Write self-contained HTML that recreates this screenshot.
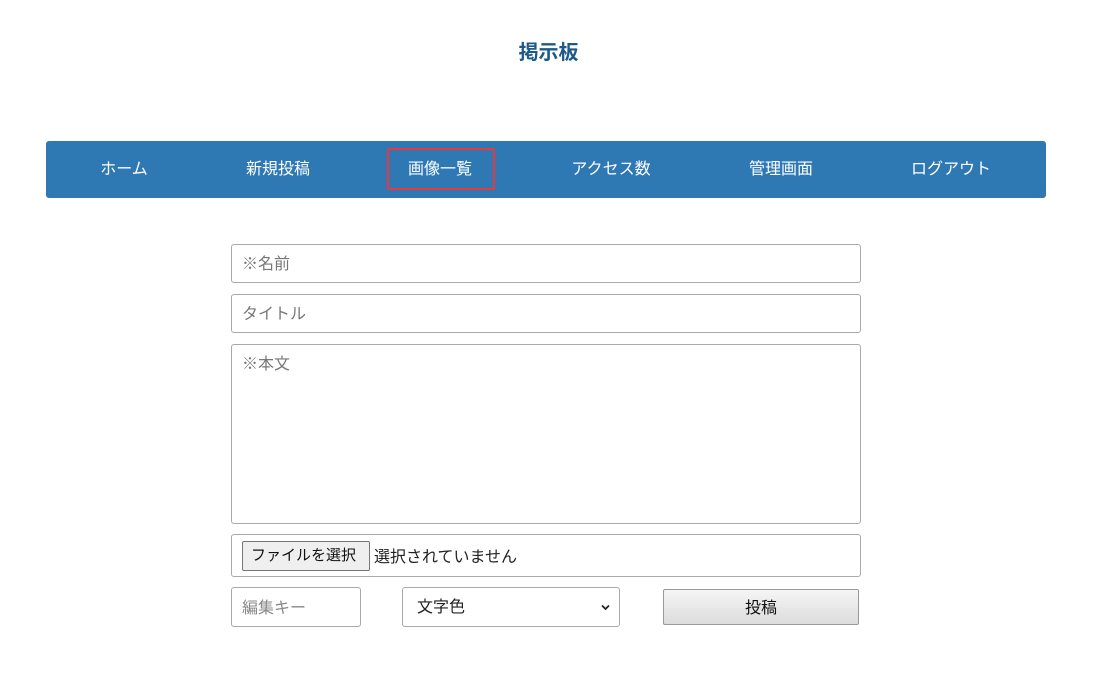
<!DOCTYPE html>
<html><head><meta charset="utf-8"><style>
*{box-sizing:border-box;margin:0;padding:0}
body{width:1097px;height:698px;background:#fff;font-family:"Liberation Sans","Noto Sans CJK JP",sans-serif;position:relative;overflow:hidden}
.a{position:absolute}
h1{position:absolute;left:0;width:1097px;top:36px;text-align:center;font-size:20px;font-weight:bold;color:#1d5a8a}
.nav{left:46px;top:141px;width:1000px;height:57px;background:#2e78b4;border-radius:3px}
.nav span{position:absolute;top:14px;color:#fff;font-size:16px;transform:translateX(-50%);white-space:nowrap}
.box{border:1px solid #aaa;border-radius:3px;background:#fff;font-size:16px;color:#777}
</style></head><body>
<h1>掲示板</h1>
<div class="a nav">
<span style="left:78px">ホーム</span>
<span style="left:232px">新規投稿</span>
<span style="left:394px">画像一覧</span>
<span style="left:565px">アクセス数</span>
<span style="left:735px">管理画面</span>
<span style="left:905px">ログアウト</span>
<div class="a" style="left:341px;top:7px;width:108px;height:42px;border:2px solid #e8383d;border-radius:2px"></div>
</div>
<div class="a box" style="left:231px;top:244px;width:630px;height:39px;padding:5px 10px">※名前</div>
<div class="a box" style="left:231px;top:294px;width:630px;height:39px;padding:5px 10px">タイトル</div>
<div class="a box" style="left:231px;top:344px;width:630px;height:180px;padding:5px 10px">※本文</div>
<div class="a box" style="left:231px;top:534px;width:630px;height:43px;color:#222">
<div class="a" style="left:10px;top:6px;width:128px;height:30px;background:#efefef;border:1px solid #777;border-radius:2px;font-size:15px;padding:2px 0 0 8px;color:#111">ファイルを選択</div>
<div class="a" style="left:142px;top:8px;font-size:16px">選択されていません</div>
</div>
<div class="a box" style="left:231px;top:587px;width:130px;height:40px;padding:6px 10px;color:#888">編集キー</div>
<div class="a box" style="left:402px;top:587px;width:218px;height:40px;padding:5px 14px;color:#222">文字色<svg class="a" style="right:9px;top:16px" width="9" height="7" viewBox="0 0 9 7"><path d="M1 1.5L4.5 5L8 1.5" stroke="#222" stroke-width="1.8" fill="none"/></svg></div>
<div class="a" style="left:663px;top:589px;width:196px;height:36px;border:1px solid #999;border-radius:2px;background:linear-gradient(#f5f5f5,#dcdcdc);text-align:center;padding-top:4px;font-size:16px;color:#111">投稿</div>
</body></html>
